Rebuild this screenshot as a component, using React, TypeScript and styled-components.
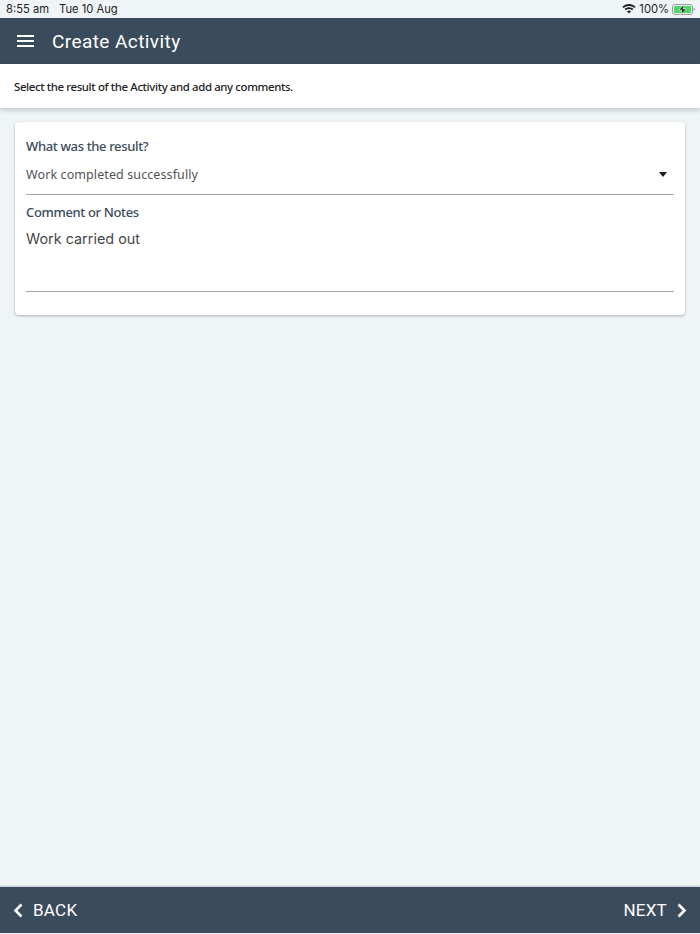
import styled, { createGlobalStyle } from "styled-components";

const GlobalStyle = createGlobalStyle`
  html, body {
    margin: 0;
    padding: 0;
    background: #eff4f7;
  }
  * {
    box-sizing: border-box;
  }
`;

const Page = styled.div`
  width: 700px;
  height: 934px;
  display: flex;
  flex-direction: column;
  overflow: hidden;
  background: #eff4f7;
`;

const StatusBar = styled.div`
  height: 18px;
  flex: none;
  display: flex;
  align-items: center;
  justify-content: space-between;
  padding: 0 5px 0 6px;
  font: 11.2px "Inter", "Liberation Sans", sans-serif;
  color: #1c1c1e;
`;

const StatusGroup = styled.div<{ $gap: number }>`
  display: flex;
  align-items: center;
  gap: ${(p) => p.$gap}px;
`;

const Header = styled.header`
  height: 46px;
  flex: none;
  display: flex;
  align-items: center;
  gap: 17px;
  padding-left: 17px;
  background: #3a4b5c;
  color: #fff;
`;

const Title = styled.h1`
  margin: 0;
  font: 400 19px "Roboto", "Liberation Sans", sans-serif;
  letter-spacing: 0.42px;
`;

const Intro = styled.div`
  height: 44px;
  flex: none;
  display: flex;
  align-items: center;
  padding-left: 14px;
  background: #fff;
  box-shadow: 0 2px 5px rgba(0, 0, 0, 0.2);
  font: 500 11.4px "Noto Sans", "Open Sans", sans-serif;
  letter-spacing: -0.37px;
  color: #222;
`;

const Content = styled.main`
  flex: 1;
  padding: 14px 15px 0 15px;
`;

const Card = styled.section`
  height: 193px;
  padding: 0 11px;
  display: flex;
  flex-direction: column;
  background: #fff;
  border-radius: 4px;
  box-shadow: 0 1px 3px rgba(0, 0, 0, 0.28);
`;

const Label = styled.div<{ $top: number }>`
  margin-top: ${(p) => p.$top}px;
  font: 500 13px/18px "Noto Sans", "Open Sans", sans-serif;
  letter-spacing: -0.35px;
  color: #3a4b5c;
`;

const SelectRow = styled.div`
  height: 40px;
  display: flex;
  align-items: center;
  justify-content: space-between;
  padding: 0 7px 1px 0;
  border-bottom: 1px solid #a3a5a7;
  font: 12.5px "Noto Sans", "Open Sans", sans-serif;
  letter-spacing: 0.1px;
  color: #505357;
`;

const Caret = styled.span`
  width: 0;
  height: 0;
  border-left: 4.5px solid transparent;
  border-right: 4.5px solid transparent;
  border-top: 5px solid #1d1d1f;
`;

const NotesField = styled.div`
  height: 71px;
  padding-top: 8px;
  border-bottom: 1px solid #a3a5a7;
  font: 14.4px/20px "Inter", "Noto Sans", sans-serif;
  color: #45474a;
`;

const Footer = styled.footer`
  height: 46px;
  flex: none;
  display: flex;
  align-items: center;
  justify-content: space-between;
  padding: 0 13px;
  background: #3a4b5c;
  box-shadow: 0 -1px 2px rgba(0, 0, 0, 0.2);
`;

const NavButton = styled.button`
  display: flex;
  align-items: center;
  gap: 10px;
  padding: 0;
  border: none;
  background: none;
  color: #fff;
  font: 400 17px "Roboto", "Liberation Sans", sans-serif;
  letter-spacing: 0.25px;
`;

const BottomEdge = styled.div`
  height: 1px;
  flex: none;
  background: #eff4f7;
`;

const MenuIcon = () => (
  <svg width="18" height="12" viewBox="0 0 18 12" fill="none" stroke="#fff" strokeWidth="1.8">
    <path d="M0 1h17M0 6h17M0 11h17" />
  </svg>
);

const WifiIcon = () => (
  <svg width="14" height="10" viewBox="0 0 14 10" fill="#1c1c1e">
    <path d="M7 2C9.1 2 11 2.8 12.4 4.1L13.6 2.8C11.9 1.1 9.6 0 7 0S2.1 1.1.4 2.8L1.6 4.1C3 2.8 4.9 2 7 2Z" />
    <path d="M7 5C8.2 5 9.3 5.5 10.2 6.2L11.4 5C10.2 3.9 8.7 3.2 7 3.2S3.8 3.9 2.6 5L3.8 6.2C4.7 5.5 5.8 5 7 5Z" />
    <path d="M7 6.5C6.2 6.5 5.5 6.8 5 7.3L7 9.6 9 7.3C8.5 6.8 7.8 6.5 7 6.5Z" />
  </svg>
);

const BatteryIcon = () => (
  <svg width="23" height="11" viewBox="0 0 23 11">
    <rect x=".5" y=".5" width="20" height="10" rx="2.5" fill="none" stroke="#9a9c9e" />
    <rect x="2" y="2" width="17" height="7" rx="1.2" fill="#4cd964" />
    <path d="M21.7 3.7c.8.2 1.1 1 1.1 1.8s-.3 1.6-1.1 1.8Z" fill="#9a9c9e" />
    <path d="M12 0 6.4 6.2h3.4L8.6 11l5.8-6.4H11Z" fill="#fff" />
    <path d="M11.6 1.2 7.4 5.8h3L9.4 9.8l4.2-4.6h-3Z" fill="#111" />
  </svg>
);

const Chevron = ({ dir }: { dir: "left" | "right" }) => (
  <svg width="10" height="15" viewBox="0 0 10 15" fill="none" stroke="#fff" strokeWidth="2.6">
    <path d={dir === "left" ? "M8.5 1.5 2.5 7.5 8.5 13.5" : "M1.5 1.5 7.5 7.5 1.5 13.5"} />
  </svg>
);

const App = () => {
  return (
    <Page>
      <GlobalStyle />
      <StatusBar>
        <StatusGroup $gap={10}>
          <span>8:55 am</span>
          <span>Tue 10 Aug</span>
        </StatusGroup>
        <StatusGroup $gap={3}>
          <WifiIcon />
          <span>100%</span>
          <BatteryIcon />
        </StatusGroup>
      </StatusBar>
      <Header>
        <MenuIcon />
        <Title>Create Activity</Title>
      </Header>
      <Intro>Select the result of the Activity and add any comments.</Intro>
      <Content>
        <Card>
          <Label $top={15}>What was the result?</Label>
          <SelectRow>
            <span>Work completed successfully</span>
            <Caret />
          </SelectRow>
          <Label $top={8}>Comment or Notes</Label>
          <NotesField>Work carried out</NotesField>
        </Card>
      </Content>
      <Footer>
        <NavButton>
          <Chevron dir="left" />
          BACK
        </NavButton>
        <NavButton>
          NEXT
          <Chevron dir="right" />
        </NavButton>
      </Footer>
      <BottomEdge />
    </Page>
  );
};

export default App;
